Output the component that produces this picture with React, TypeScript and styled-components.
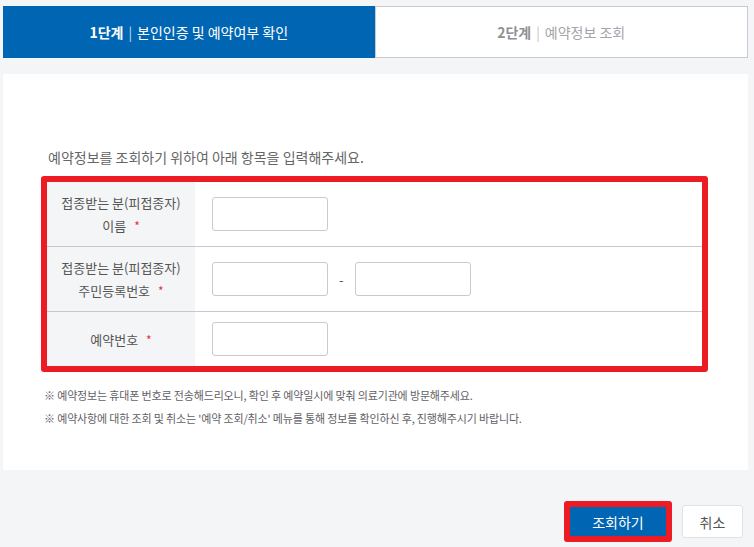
import React from "react";
import styled, { createGlobalStyle } from "styled-components";

const GlobalStyle = createGlobalStyle`
  html, body {
    margin: 0;
    padding: 0;
    background: #f4f5f7;
  }
  body {
    font-family: "Noto Sans CJK KR", "Noto Sans", sans-serif;
    color: #555;
  }
  * { box-sizing: border-box; }
`;

const Page = styled.div`
  padding: 6px 6px 5px 3px;
  width: 754px;
`;

const Tabs = styled.div`
  display: flex;
  height: 52px;
`;

const Tab = styled.div<{ $active?: boolean }>`
  flex: 1;
  display: flex;
  align-items: center;
  justify-content: center;
  font-size: 14px;
  background: ${(p) => (p.$active ? "#0066b3" : "#ffffff")};
  color: ${(p) => (p.$active ? "#ffffff" : "#a3a5aa")};
  border: ${(p) => (p.$active ? "none" : "1px solid #c8cad0")};
`;

const Step = styled.strong<{ $active?: boolean }>`
  font-weight: 700;
  color: ${(p) => (p.$active ? "#ffffff" : "#8e9096")};
`;

const Divider = styled.span`
  margin: 0 5px;
  font-weight: 300;
`;

const Card = styled.div`
  margin-top: 16px;
  background: #ffffff;
  padding: 73px 40px 40px 38px;
`;

const Intro = styled.p`
  margin: 0 0 9px 7px;
  font-size: 14px;
  line-height: 20px;
  color: #666;
`;

const FormBox = styled.div`
  border: 6px solid #ed1c24;
  border-radius: 3px;
`;

const Row = styled.div<{ $last?: boolean }>`
  display: grid;
  grid-template-columns: 148px 1fr;
  border-bottom: ${(p) => (p.$last ? "none" : "1px solid #c8c9d0")};
`;

const Label = styled.div`
  background: #f4f5f7;
  padding: 9px 6px;
  text-align: center;
  font-size: 13px;
  line-height: 23px;
  color: #555;
  display: flex;
  flex-direction: column;
  justify-content: center;
`;

const Required = styled.span`
  color: #e8334a;
  font-size: 12px;
  margin-left: 8px;
`;

const Field = styled.div`
  display: flex;
  align-items: center;
  padding: 10px 17px;
`;

const Input = styled.input`
  width: 116px;
  height: 34px;
  border: 1px solid #c8cad0;
  border-radius: 3px;
  background: #fff;
  font-family: inherit;
  font-size: 13px;
  padding: 0 8px;
  outline: none;
`;

const Dash = styled.span`
  padding: 0 11px;
  font-size: 13px;
  color: #555;
`;

const Notes = styled.div`
  margin: 12px 0 0 3px;
`;

const Note = styled.p`
  margin: 0;
  font-size: 11px;
  letter-spacing: -0.15px;
  line-height: 23px;
  color: #5f6166;
`;

const Actions = styled.div`
  display: flex;
  justify-content: flex-end;
  align-items: center;
  gap: 10px;
  margin-top: 31px;
  padding-right: 5px;
`;

const Highlight = styled.div`
  border: 6px solid #ed1c24;
  border-radius: 3px;
  display: flex;
`;

const PrimaryButton = styled.button`
  width: 96px;
  height: 29px;
  border: none;
  background: #0066b3;
  color: #fff;
  font-family: inherit;
  font-size: 14px;
  padding: 0;
  cursor: pointer;
`;

const SecondaryButton = styled.button`
  width: 61px;
  height: 33px;
  border: 1px solid #e0e2e6;
  border-radius: 3px;
  background: #fff;
  color: #555;
  font-family: inherit;
  font-size: 14px;
  padding: 0;
  cursor: pointer;
`;

export default function App() {
  return (
    <Page>
      <GlobalStyle />
      <Tabs>
        <Tab $active>
          <Step $active>1단계</Step>
          <Divider>|</Divider>
          <span>본인인증 및 예약여부 확인</span>
        </Tab>
        <Tab>
          <Step>2단계</Step>
          <Divider>|</Divider>
          <span>예약정보 조회</span>
        </Tab>
      </Tabs>
      <Card>
        <Intro>예약정보를 조회하기 위하여 아래 항목을 입력해주세요.</Intro>
        <FormBox>
          <Row>
            <Label>
              <span>접종받는 분(피접종자)</span>
              <span>
                이름<Required>*</Required>
              </span>
            </Label>
            <Field>
              <Input type="text" />
            </Field>
          </Row>
          <Row>
            <Label>
              <span>접종받는 분(피접종자)</span>
              <span>
                주민등록번호<Required>*</Required>
              </span>
            </Label>
            <Field>
              <Input type="text" />
              <Dash>-</Dash>
              <Input type="password" />
            </Field>
          </Row>
          <Row $last>
            <Label>
              <span>
                예약번호<Required>*</Required>
              </span>
            </Label>
            <Field>
              <Input type="text" />
            </Field>
          </Row>
        </FormBox>
        <Notes>
          <Note>※ 예약정보는 휴대폰 번호로 전송해드리오니, 확인 후 예약일시에 맞춰 의료기관에 방문해주세요.</Note>
          <Note>※ 예약사항에 대한 조회 및 취소는 '예약 조회/취소' 메뉴를 통해 정보를 확인하신 후, 진행해주시기 바랍니다.</Note>
        </Notes>
      </Card>
      <Actions>
        <Highlight>
          <PrimaryButton>조회하기</PrimaryButton>
        </Highlight>
        <SecondaryButton>취소</SecondaryButton>
      </Actions>
    </Page>
  );
}
